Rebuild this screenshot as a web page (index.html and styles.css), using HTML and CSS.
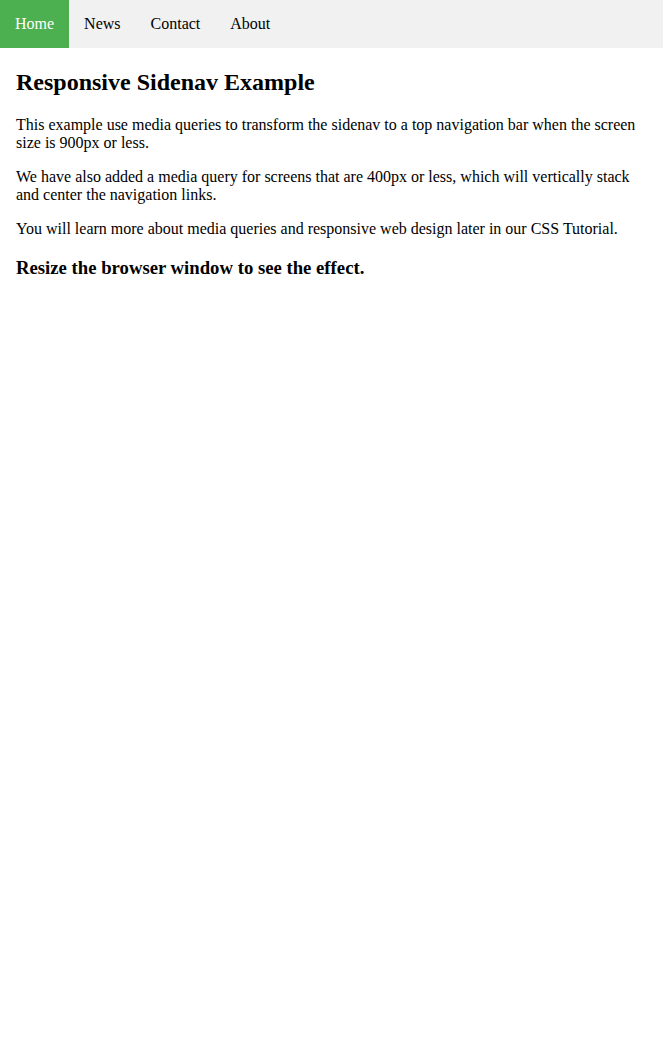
FILE: index.html
```html
<!DOCTYPE html>
<html>
<head>
<meta charset="utf-8">
<title>Responsive Sidenav</title>
<link rel="stylesheet" href="styles.css">
</head>
<body>
<div class="sidebar">
  <a class="active" href="#home">Home</a>
  <a href="#news">News</a>
  <a href="#contact">Contact</a>
  <a href="#about">About</a>
</div>
<div class="content">
  <h2>Responsive Sidenav Example</h2>
  <p>This example use media queries to transform the sidenav to a top navigation bar when the screen size is 900px or less.</p>
  <p>We have also added a media query for screens that are 400px or less, which will vertically stack and center the navigation links.</p>
  <p>You will learn more about media queries and responsive web design later in our CSS Tutorial.</p>
  <h3>Resize the browser window to see the effect.</h3>
</div>
</body>
</html>
```
FILE: styles.css
```css
body {
  margin: 0;
  font-family: "Liberation Serif", "Times New Roman", serif;
  color: #000;
  background: #fff;
}
.sidebar {
  display: flex;
  background-color: #f1f1f1;
}
.sidebar a {
  display: block;
  color: black;
  padding: 16px 15px 16px 15px;
  text-decoration: none;
  line-height: 16px;
}
.sidebar a.active {
  background-color: #4CAF50;
  color: white;
}
.content {
  padding: 1px 16px;
}
```
